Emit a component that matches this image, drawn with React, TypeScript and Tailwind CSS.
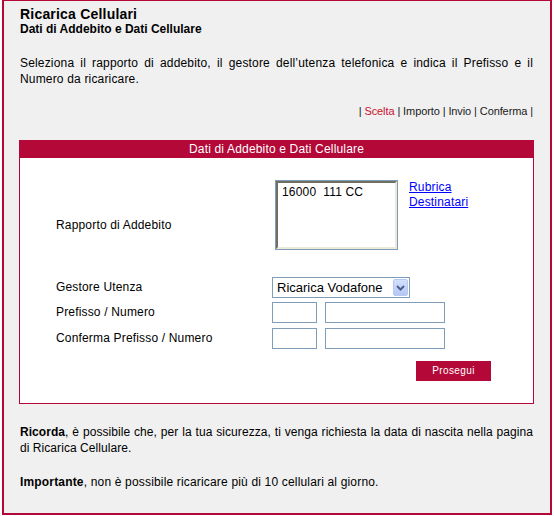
export default function App() {
  return (
    <div className="w-[554px] h-[516px] bg-white font-['Liberation_Sans',Arial,sans-serif] text-black tracking-[0.17px]">
      <div className="ml-[2px] w-[550px] h-[515px] bg-[#f0f0f0] border-t border-l-2 border-r-2 border-b-2 border-[#b30838] pl-4 pr-[17px] pt-[5px]">
        <div className="text-[14px] leading-[16px] font-bold tracking-[0.2px]">Ricarica Cellulari</div>
        <div className="text-[12px] leading-[15px] font-bold tracking-[0px]">Dati di Addebito e Dati Cellulare</div>
        <p className="mt-[18px] text-[12px] leading-[16px] text-justify">
          Seleziona il rapporto di addebito, il gestore dell’utenza telefonica e indica il Prefisso e il Numero da ricaricare.
        </p>
        <div className="mt-[17px] text-[11px] leading-[14px] text-right text-[#1a1a1a] tracking-[-0.1px]">
          | <span className="text-[#c8102e]">Scelta</span> | Importo | Invio | Conferma |
        </div>

        <div className="-mx-px mt-[22px] border border-[#b30838] bg-white">
          <div className="h-[17px] bg-[#b30838] text-white text-[12px] leading-[17px] text-center">
            Dati di Addebito e Dati Cellulare
          </div>
          <div className="pl-[36px] pt-[22px] pb-[22px] text-[12px] leading-[15px]">
            <div className="flex h-[90px]">
              <div className="w-[216px] self-center">Rapporto di Addebito</div>
              <div className="flex items-start ml-[3px]">
                <div className="w-[123px] h-[70px] border border-[#7f9db9]">
                  <div className="h-full border-t-2 border-l-2 border-b-2 border-r-2 border-t-[#716f64] border-l-[#716f64] border-b-[#ece9d8] border-r-[#ece9d8] pl-[4px] pt-[2px] whitespace-pre">
                    16000  111 CC
                  </div>
                </div>
                <div className="ml-[11px] flex flex-col">
                  <a href="#" className="text-[#0000ff] underline">Rubrica</a>
                  <a href="#" className="text-[#0000ff] underline">Destinatari</a>
                </div>
              </div>
            </div>

            <div className="mt-[7px] flex items-center h-[21px]">
              <div className="w-[216px]">Gestore Utenza</div>
              <div className="w-[138px] h-[21px] border border-[#7f9db9] bg-white flex items-center justify-between">
                <span className="pl-[4px] text-[13px] leading-[17px] tracking-[0px]">Ricarica Vodafone</span>
                <div className="mr-px w-[15px] h-[17px] rounded-[2px] border border-[#b7c8f2] bg-gradient-to-b from-[#d3e0fd] to-[#b4c8f5] flex items-center justify-center">
                  <svg width="9" height="6" viewBox="0 0 9 6">
                    <path d="M1 1 L4.5 4.5 L8 1" stroke="#4d6185" strokeWidth="2" fill="none" />
                  </svg>
                </div>
              </div>
            </div>

            <div className="mt-[4px] flex items-center h-[21px]">
              <div className="w-[216px]">Prefisso / Numero</div>
              <div className="w-[45px] h-[21px] border border-[#7f9db9] bg-white" />
              <div className="ml-[8px] w-[120px] h-[21px] border border-[#7f9db9] bg-white" />
            </div>

            <div className="mt-[5px] flex items-center h-[21px]">
              <div className="w-[216px]">Conferma Prefisso / Numero</div>
              <div className="w-[45px] h-[21px] border border-[#7f9db9] bg-white" />
              <div className="ml-[8px] w-[120px] h-[21px] border border-[#7f9db9] bg-white" />
            </div>

            <div className="mt-[12px] flex justify-end pr-[42px]">
              <div className="w-[75px] h-[20px] bg-[#b30838] text-white text-[10px] leading-[20px] tracking-[0.4px] text-center">
                Prosegui
              </div>
            </div>
          </div>
        </div>

        <p className="mt-[20px] text-[12px] leading-[16px] text-justify tracking-[0.06px]">
          <b>Ricorda</b>, è possibile che, per la tua sicurezza, ti venga richiesta la data di nascita nella pagina di Ricarica Cellulare.
        </p>
        <p className="mt-[18px] text-[12px] leading-[16px]">
          <b>Importante</b>, non è possibile ricaricare più di 10 cellulari al giorno.
        </p>
      </div>
    </div>
  );
}
